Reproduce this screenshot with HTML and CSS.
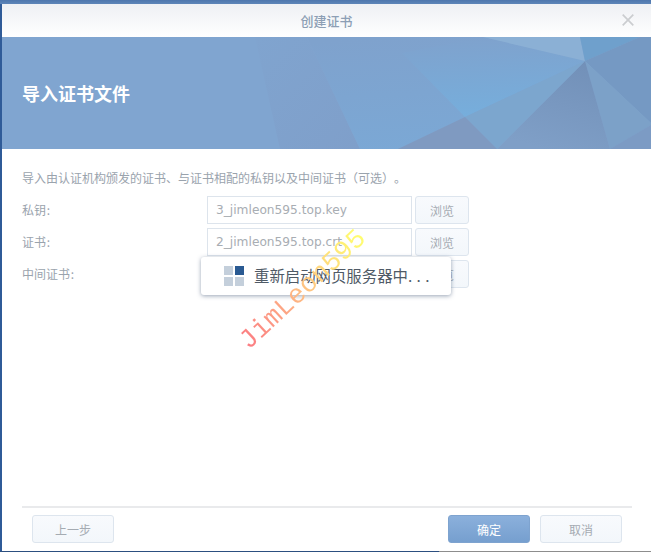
FILE: index.html
```html
<!DOCTYPE html>
<html lang="zh">
<head>
<meta charset="utf-8">
<title>创建证书</title>
<link rel="stylesheet" href="styles.css">
</head>
<body>
<div class="desk">
  <div class="dialog">
    <header class="titlebar">
      <span class="title">创建证书</span>
      <svg class="close" width="12" height="12" viewBox="0 0 12 12"><path d="M.7.7l10.6 10.6M11.3.7L.7 11.3" stroke="#cbcdd0" stroke-width="1.7" fill="none"/></svg>
    </header>
    <section class="banner">
      <svg class="facets" width="651" height="112" viewBox="0 0 651 112">
        <defs>
          <linearGradient id="left" x1="0" y1="0" x2="1" y2="1">
            <stop offset="0" stop-color="#80a4cf"/>
            <stop offset="1" stop-color="#7f9fca"/>
          </linearGradient>
          <linearGradient id="mid" x1="0.3" y1="0" x2="0.45" y2="1">
            <stop offset="0" stop-color="#7fa2cd"/>
            <stop offset="1" stop-color="#7ba8d5"/>
          </linearGradient>
          <linearGradient id="bright" x1="0.3" y1="0" x2="0.4" y2="1">
            <stop offset="0" stop-color="#7fa2cd"/>
            <stop offset="1" stop-color="#76aedc"/>
          </linearGradient>
          <linearGradient id="dark" x1="0.8" y1="0" x2="0.4" y2="1">
            <stop offset="0" stop-color="#7290b8"/>
            <stop offset="1" stop-color="#7f9fc7"/>
          </linearGradient>
        </defs>
        <polygon points="255,0 307,0 360,112 280,112" fill="url(#left)"/>
        <polygon points="307,0 483,0 585,24 465,80 398,112 360,112" fill="url(#mid)"/>
        <polygon points="402,16 483,0 585,24 465,80" fill="url(#bright)"/>
        <polygon points="483,0 580,0 585,24" fill="#8bb0d5"/>
        <polygon points="580,0 640,0 585,24" fill="#6fa0cc"/>
        <polygon points="640,0 651,0 651,86 585,24" fill="#7599c3"/>
        <polygon points="585,24 651,86 651,88 610,112" fill="#7ca1c8"/>
        <polygon points="610,112 651,88 651,112" fill="#7c9bc4"/>
        <polygon points="585,24 610,112 497,112" fill="url(#dark)"/>
        <polygon points="585,24 497,112 465,80" fill="#7ca6ce"/>
        <polygon points="465,80 497,112 398,112" fill="#7f9ac1"/>
      </svg>
      <h1 class="heading">导入证书文件</h1>
    </section>
    <main class="content">
      <p class="intro">导入由认证机构颁发的证书、与证书相配的私钥以及中间证书（可选）。</p>
      <div class="row">
        <label class="label">私钥&#8202;:</label>
        <div class="field">3_jimleon595.top.key</div>
        <button class="btn browse">浏览</button>
      </div>
      <div class="row">
        <label class="label">证书&#8202;:</label>
        <div class="field">2_jimleon595.top.crt</div>
        <button class="btn browse">浏览</button>
      </div>
      <div class="row">
        <label class="label">中间证书&#8202;:</label>
        <div class="field"></div>
        <button class="btn browse">浏览</button>
      </div>
    </main>
    <footer class="footer">
      <button class="btn wide">上一步</button>
      <span class="spacer"></span>
      <button class="btn wide primary">确定</button>
      <button class="btn wide">取消</button>
    </footer>
    <div class="bottom-edge"><span class="edge-a"></span><span class="edge-b"></span></div>
  </div>
  <div class="toast">
    <span class="spinner"><i class="sq"></i><i class="sq on"></i><i class="sq"></i><i class="sq"></i></span>
    <span class="toast-text">重新启动网页服务器中<span class="dots">...</span></span>
  </div>
  <div class="watermark">JimLeon595</div>
</div>
</body>
</html>
```
FILE: styles.css
```css
* { box-sizing: border-box; }
html, body { margin: 0; padding: 0; }
body {
  width: 651px;
  height: 552px;
  overflow: hidden;
  background: #fff;
  font-family: "Noto Sans CJK SC", "Noto Sans", sans-serif;
  text-spacing-trim: space-all;
}
.desk {
  position: relative;
  width: 651px;
  height: 552px;
  padding-left: 2px;
  padding-top: 4px;
  background: #2f5b98;
  overflow: hidden;
}
.desk::before {
  content: "";
  position: absolute;
  left: 0;
  top: 0;
  width: 651px;
  height: 4px;
  background: linear-gradient(#4d76ad, #5d85b8);
}
.dialog {
  position: relative;
  height: 548px;
  background: #fff;
  display: flex;
  flex-direction: column;
}
.titlebar {
  height: 33px;
  flex: none;
  display: flex;
  align-items: center;
  justify-content: center;
  background: linear-gradient(#eef0f4, #ffffff);
  position: relative;
}
.title {
  font-size: 13px;
  color: #8d9fb5;
  font-weight: 500;
}
.close {
  position: absolute;
  right: 17px;
  top: 10px;
}
.banner {
  height: 112px;
  flex: none;
  position: relative;
  background: #80a5d0;
  display: flex;
  align-items: center;
  overflow: hidden;
}
.facets {
  position: absolute;
  left: -2px;
  top: 0;
}
.heading {
  position: relative;
  margin: 0 0 0 20px;
  font-size: 18px;
  line-height: 24px;
  font-weight: 700;
  color: #fff;
}
.content {
  flex: 1;
  padding: 20px 0 0 20px;
}
.intro {
  margin: 0 0 10px;
  font-size: 12px;
  line-height: 17px;
  color: #9aa3ad;
}
.row {
  display: flex;
  align-items: center;
  height: 28px;
  margin-bottom: 4px;
}
.label {
  width: 185px;
  padding-bottom: 2px;
  font-size: 12px;
  color: #9aa3ad;
}
.field {
  width: 205px;
  height: 28px;
  border: 1px solid #dde4ec;
  padding: 0 8px;
  font-family: "DejaVu Sans", sans-serif;
  font-size: 12.2px;
  line-height: 26px;
  color: #a8adb3;
  background: #fff;
}
.btn {
  height: 28px;
  padding: 0;
  border: 1px solid #dde5ee;
  border-radius: 3px;
  background: linear-gradient(#f8fafd, #f3f7fb);
  color: #a5abb2;
  font-family: "Noto Sans CJK SC", sans-serif;
  font-size: 12px;
}
.browse {
  width: 54px;
  margin-left: 3px;
}
.footer {
  flex: none;
  height: 46px;
  margin: 0 19px 0 20px;
  padding: 7px 10px 0;
  border-top: 2px solid #e9eaec;
  display: flex;
  align-items: flex-start;
  gap: 10px;
}
.spacer { flex: 1; }
.wide { width: 82px; }
.primary {
  background: linear-gradient(#8bb0dc, #769fcf);
  border-color: #7ea3cf;
  color: #fff;
}
.bottom-edge {
  position: absolute;
  left: -2px;
  bottom: 0;
  width: 651px;
  height: 1px;
  display: flex;
}
.edge-a { width: 439px; background: #2c4f80; }
.edge-b { flex: 1; background: #8d8d8d; }
.toast {
  position: absolute;
  left: 201px;
  top: 257px;
  width: 250px;
  height: 38px;
  display: flex;
  align-items: center;
  gap: 10px;
  padding-left: 23px;
  background: #fff;
  border-radius: 3px;
  box-shadow: 0 1px 4px rgba(70, 90, 120, .55);
}
.spinner {
  width: 20px;
  height: 20px;
  display: grid;
  grid-template-columns: 9px 9px;
  grid-template-rows: 9px 9px;
  gap: 2px;
}
.sq { background: #c4cfdb; }
.sq.on { background: #2a5a92; }
.toast-text {
  padding-bottom: 2px;
  font-size: 15.4px;
  color: #4f5a66;
  white-space: nowrap;
}
.dots { letter-spacing: 4.4px; }
.watermark {
  position: absolute;
  left: 222px;
  top: 274px;
  width: 162px;
  font-family: "Liberation Mono", monospace;
  font-size: 27px;
  line-height: 32px;
  white-space: nowrap;
  transform: rotate(-43deg);
  background: linear-gradient(90deg, #fb7a82 0%, #fda884 35%, #ffcf80 60%, #ffff70 100%);
  -webkit-background-clip: text;
  background-clip: text;
  color: transparent;
}
```
